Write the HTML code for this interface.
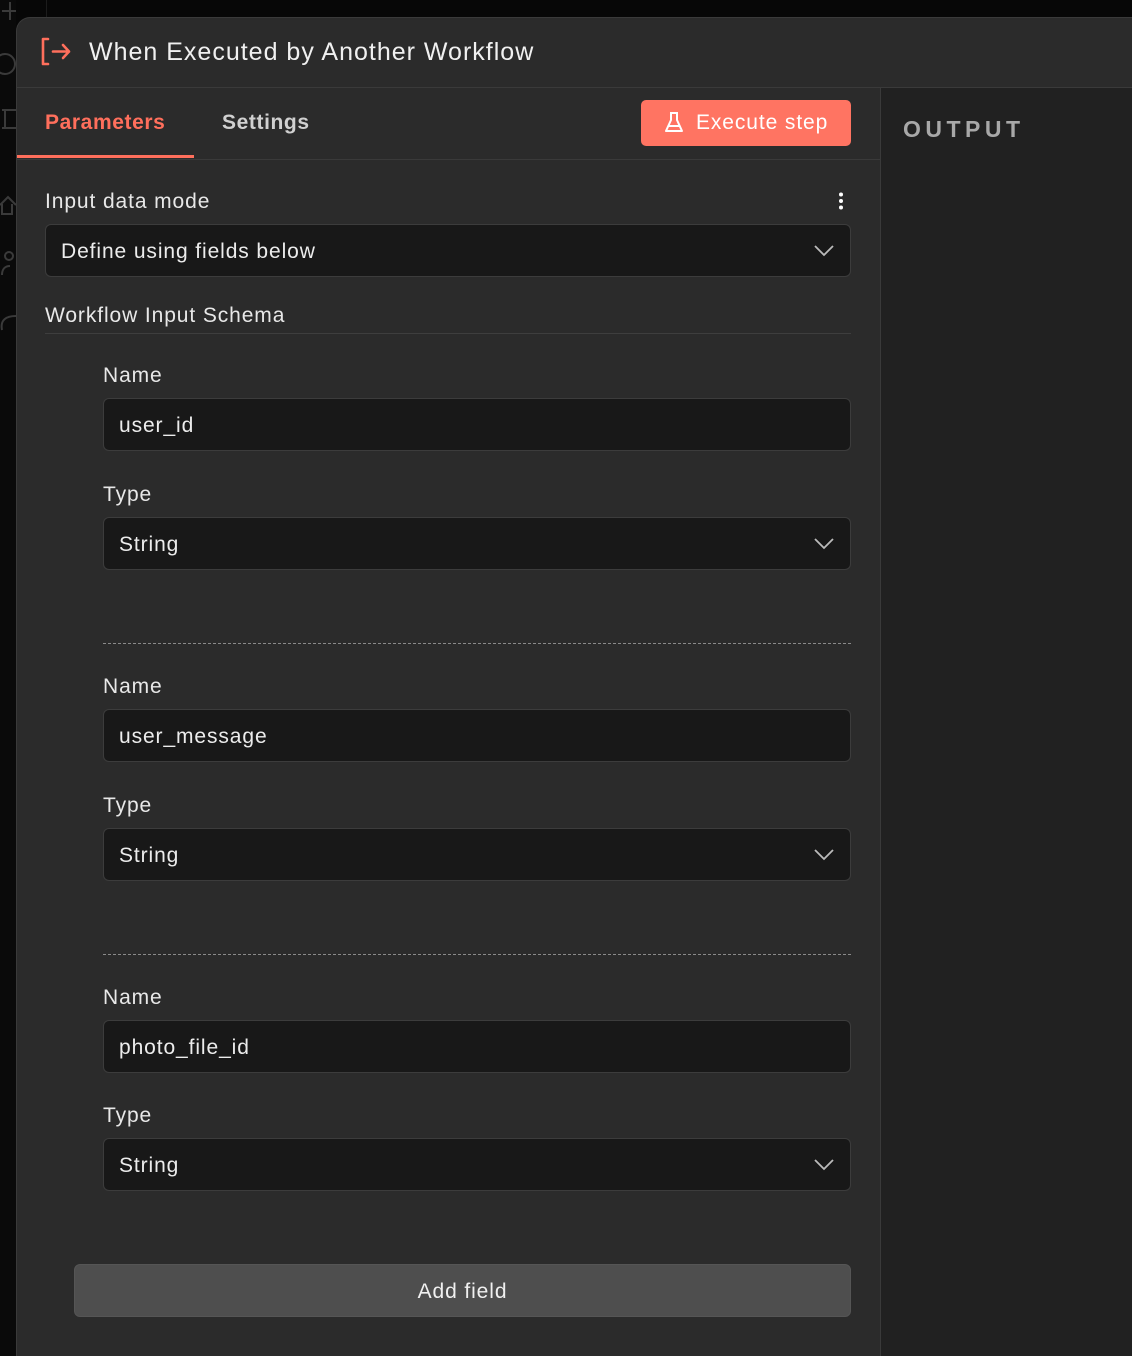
<!DOCTYPE html>
<html><head><meta charset="utf-8"><style>
*{box-sizing:border-box;margin:0;padding:0}
html{width:1132px;height:1356px;overflow:hidden}
body{width:1132px;height:1356px;background:#070707;font-family:"Liberation Sans",sans-serif;color:#ececec;position:relative;overflow:hidden;letter-spacing:0.9px}
.abs{position:absolute}
.panel{left:16px;top:17px;width:1116px;height:1339px;background:#2b2b2b;border:1px solid #3a3a3a;border-right:none;border-bottom:none;border-radius:14px 0 0 0;overflow:hidden}
.lbl{position:absolute;font-size:21px;color:#e8e8e8;line-height:26px}
.inp{position:absolute;height:53px;background:#181818;border:1px solid #3c3c3c;border-radius:6px;font-size:21px;line-height:53px;padding-left:15px;color:#ececec}
.chev{position:absolute;right:16px;top:20px}
.dash{position:absolute;left:103px;width:748px;border-top:1px dashed #8a8a8a}
</style></head><body>
<div class="abs" style="left:0;top:0;width:16px;height:1356px;background:#0a0a0a"></div>
<svg class="abs" style="left:0;top:0" width="16" height="340" fill="none" stroke="#3a3a3a" stroke-width="2">
<path d="M10 2v18M2 11h16"/><circle cx="5" cy="64" r="10"/><path d="M2 110h14M2 128h14M5 110v18"/>
<path d="M0 205l8-8 8 8M2 204v10h10v-10"/><circle cx="9" cy="256" r="4"/><path d="M2 275c0-6 3-9 8-9"/><path d="M2 330c-2-10 4-14 14-14"/>
</svg>
<div class="abs" style="left:46px;top:0;width:1px;height:372px;background:#1c1c1c"></div>
<div class="abs panel"></div>
<div class="abs" style="left:880px;top:88px;width:252px;height:1268px;background:#212121;border-left:1px solid #3a3a3a"></div>
<div class="abs" style="left:903px;top:116px;font-size:23px;letter-spacing:4.5px;color:#a8a8a8;font-weight:bold">OUTPUT</div>
<svg class="abs" style="left:38px;top:36px" width="36" height="32" fill="none" stroke="#ff6f5c" stroke-width="2.6" stroke-linecap="round" stroke-linejoin="round">
<path d="M10 3H5v25h5"/><path d="M15 15.5h16M25 9l6 6.5-6 6.5"/>
</svg>
<div class="abs" style="left:89px;top:38px;font-size:25px;color:#f0f0f0;letter-spacing:1px">When Executed by Another Workflow</div>
<div class="abs" style="left:17px;top:87px;width:1115px;height:1px;background:#3a3a3a"></div>
<div class="abs" style="left:45px;top:111px;font-size:21px;font-weight:bold;color:#ff6f5c;letter-spacing:0.6px">Parameters</div>
<div class="abs" style="left:222px;top:111px;font-size:21px;font-weight:bold;color:#d0d0d0;letter-spacing:0.6px">Settings</div>
<div class="abs" style="left:17px;top:155px;width:177px;height:3px;background:#ff6f5c"></div>
<div class="abs" style="left:17px;top:159px;width:863px;height:1px;background:#3a3a3a"></div>
<div class="abs" style="left:641px;top:100px;width:210px;height:46px;background:#ff7462;border-radius:5px"></div>
<svg class="abs" style="left:664px;top:111px" width="20" height="24" fill="none" stroke="#fff" stroke-width="2" stroke-linejoin="round"><path d="M6 2h8M7 2v7L2 20h16L13 9V2M4 15h12"/></svg>
<div class="abs" style="left:696px;top:111px;font-size:21px;color:#fff">Execute step</div>
<div class="lbl" style="left:45px;top:189px">Input data mode</div>
<svg class="abs" style="left:837px;top:192px" width="8" height="18" fill="#fff"><circle cx="4" cy="2.5" r="2"/><circle cx="4" cy="9" r="2"/><circle cx="4" cy="15.5" r="2"/></svg>
<div class="inp" style="left:45px;top:224px;width:806px">Define using fields below<svg class="chev" width="20" height="12" fill="none" stroke="#bbb" stroke-width="1.8"><path d="M1 1l9 9 9-9"/></svg></div>
<div class="lbl" style="left:45px;top:303px">Workflow Input Schema</div>
<div class="abs" style="left:45px;top:333px;width:806px;height:1px;background:#3e3e3e"></div>
<div class="lbl" style="left:103px;top:363px">Name</div>
<div class="inp" style="left:103px;top:398px;width:748px">user_id</div>
<div class="lbl" style="left:103px;top:482px">Type</div>
<div class="inp" style="left:103px;top:517px;width:748px">String<svg class="chev" width="20" height="12" fill="none" stroke="#bbb" stroke-width="1.8"><path d="M1 1l9 9 9-9"/></svg></div>
<div class="dash" style="top:643px"></div>
<div class="lbl" style="left:103px;top:674px">Name</div>
<div class="inp" style="left:103px;top:709px;width:748px">user_message</div>
<div class="lbl" style="left:103px;top:793px">Type</div>
<div class="inp" style="left:103px;top:828px;width:748px">String<svg class="chev" width="20" height="12" fill="none" stroke="#bbb" stroke-width="1.8"><path d="M1 1l9 9 9-9"/></svg></div>
<div class="dash" style="top:954px"></div>
<div class="lbl" style="left:103px;top:985px">Name</div>
<div class="inp" style="left:103px;top:1020px;width:748px">photo_file_id</div>
<div class="lbl" style="left:103px;top:1103px">Type</div>
<div class="inp" style="left:103px;top:1138px;width:748px">String<svg class="chev" width="20" height="12" fill="none" stroke="#bbb" stroke-width="1.8"><path d="M1 1l9 9 9-9"/></svg></div>
<div class="abs" style="left:74px;top:1264px;width:777px;height:53px;background:#4e4e4e;border:1px solid #555;border-radius:6px;text-align:center;font-size:21px;line-height:53px;color:#f0f0f0">Add field</div>
</body></html>
